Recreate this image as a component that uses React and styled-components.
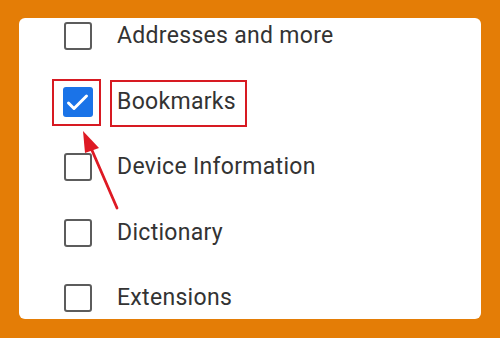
import React from "react";
import styled, { createGlobalStyle } from "styled-components";

const Global = createGlobalStyle`
  html, body { margin: 0; padding: 0; }
  body {
    background: #e47d06;
    font-family: Roboto, "Noto Sans", "Liberation Sans", sans-serif;
    width: 500px;
    height: 338px;
    overflow: hidden;
  }
`;

const Frame = styled.div`
  width: 500px;
  height: 338px;
  padding: 18px 19px 19px 19px;
  box-sizing: border-box;
`;

const Card = styled.div`
  position: relative;
  background: #ffffff;
  border-radius: 6px;
  height: 301px;
  overflow: hidden;
`;

const List = styled.ul`
  list-style: none;
  margin: 0;
  padding: 4px 0 0 45px;
  display: flex;
  flex-direction: column;
  gap: 37.5px;
`;

const Row = styled.li`
  position: relative;
  display: flex;
  align-items: center;
  gap: 25px;
  height: 28px;
`;

const Box = styled.span`
  position: relative;
  flex: none;
  width: 28px;
  height: 28px;
  box-sizing: border-box;
  border-radius: 3px;
  border: ${(p) => (p.$checked ? "none" : "2.5px solid #5c5c5c")};
  background: ${(p) => (p.$checked ? "#1a73e8" : "#fff")};
  display: flex;
  align-items: center;
  justify-content: center;
  ${(p) => (p.$checked ? "width: 30px; height: 30px; margin-left: -1px; margin-right: -1px;" : "")}
`;

const Label = styled.span`
  position: relative;
  font-size: 23px;
  color: #333333;
  line-height: 28px;
  letter-spacing: 0.3px;
  white-space: nowrap;
`;

const Highlight = styled.span`
  position: absolute;
  border: 2.5px solid #d71a22;
  box-sizing: border-box;
  pointer-events: none;
`;

const CheckHighlight = styled(Highlight)`
  left: -11px;
  top: -8px;
  width: 49px;
  height: 47px;
`;

const LabelHighlight = styled(Highlight)`
  left: -7px;
  top: -8px;
  width: 137px;
  height: 47px;
`;

const Arrow = styled.svg`
  position: absolute;
  left: 0;
  top: 0;
  pointer-events: none;
`;

const items = [
  { label: "Addresses and more" },
  { label: "Bookmarks", checked: true },
  { label: "Device Information" },
  { label: "Dictionary" },
  { label: "Extensions" },
];

function Check() {
  return (
    <svg width="30" height="30" viewBox="0 0 30 30">
      <polyline
        points="5.5,16 11,21.5 23.5,9"
        fill="none"
        stroke="#fff"
        strokeWidth="3"
        strokeLinecap="round"
        strokeLinejoin="round"
      />
    </svg>
  );
}

export default function App() {
  return (
    <>
      <Global />
      <Frame>
        <Card>
          <List>
            {items.map((it) => (
              <Row key={it.label}>
                <Box $checked={it.checked}>
                  {it.checked && <Check />}
                  {it.checked && <CheckHighlight />}
                </Box>
                <Label>
                  {it.label}
                  {it.checked && <LabelHighlight />}
                </Label>
              </Row>
            ))}
          </List>
          <Arrow width="462" height="301" viewBox="0 0 462 301">
            <line x1="98" y1="190" x2="72" y2="130" stroke="#de1a24" strokeWidth="2.8" strokeLinecap="round" />
            <polygon points="64,113 66,135 80,130" fill="#de1a24" />
          </Arrow>
        </Card>
      </Frame>
    </>
  );
}
